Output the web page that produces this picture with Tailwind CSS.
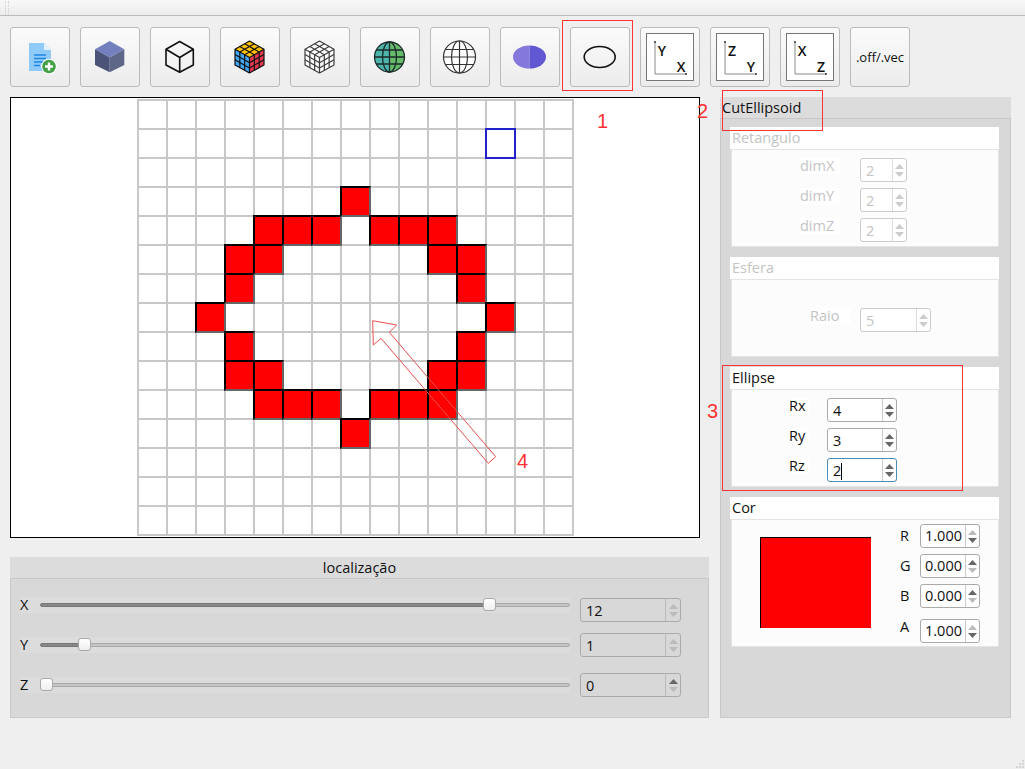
<!DOCTYPE html>
<html lang="en">
<head>
    <meta charset="UTF-8">
    <title>CutEllipsoid</title>
    <script src="https://cdn.jsdelivr.net/npm/@tailwindcss/browser@4"></script>
</head>
<body class="bg-[#efefef]">
<div class="relative w-[1025px] h-[769px] overflow-hidden bg-[#efefef] text-[14.5px] leading-4 text-[#111] font-['Open_Sans',sans-serif]">

    <!-- top strip -->
    <div class="h-4 border-b border-[#bdbdbd] bg-gradient-to-b from-[#f8f8f8] to-[#ececec] pl-[5px] pt-px">
        <div class="w-1 h-3.5 border-x border-dotted border-[#cfcfcf]"></div>
    </div>

    <!-- toolbar -->
    <div class="flex gap-2.5 pl-2.5 pt-[11px] pb-2.5">
        <button class="w-[60px] h-[60px] rounded-[3px] border border-[#bbb] bg-gradient-to-b from-[#fbfbfb] to-[#ececec]">
            <svg class="-m-px" width="60" height="60">
                <path d="M19 16H34L41 23V44H19z" fill="#90caf9"/>
                <path d="M34 16L41 23H34z" fill="#e3f2fd"/>
                <path d="M24 28H36M24 31.500H36M24 35H33M24 38.500H30" stroke="#1e88e5" stroke-width="1.300"/>
                <circle cx="39" cy="39.500" r="7.800" fill="#fff"/>
                <circle cx="39" cy="39.500" r="6.800" fill="#43a047"/>
                <path d="M39 35.500V43.500M35 39.500H43" stroke="#fff" stroke-width="2.400"/>
            </svg>
        </button>
        <button class="w-[60px] h-[60px] rounded-[3px] border border-[#bbb] bg-gradient-to-b from-[#fbfbfb] to-[#ececec]">
            <svg class="-m-px" width="60" height="60">
                <path d="M29.700 14L44.300 22.300L29.700 30.500L15 22.300z" fill="#7280bd"/>
                <path d="M15 22.300L29.700 30.500V45.300L15 38z" fill="#4b5478"/>
                <path d="M44.300 22.300L29.700 30.500V45.300L44.300 38z" fill="#5f6789"/>
            </svg>
        </button>
        <button class="w-[60px] h-[60px] rounded-[3px] border border-[#bbb] bg-gradient-to-b from-[#fbfbfb] to-[#ececec]">
            <svg class="-m-px" width="60" height="60" fill="none" stroke="#111" stroke-width="1.600" stroke-linejoin="round">
                <path d="M29.700 14.500L43.300 22.300V38L29.700 45.300L16 38V22.300zM16 22.300L29.700 30.500L43.300 22.300M29.700 30.500V45.300"/>
            </svg>
        </button>
        <button class="w-[60px] h-[60px] rounded-[3px] border border-[#bbb] bg-gradient-to-b from-[#fbfbfb] to-[#ececec]">
            <svg class="-m-px" width="60" height="60">
                <path d="M29.500 14L44 22.300L29.500 30.500L15 22.300z" fill="#ffc107"/>
                <path d="M15 22.300L29.500 30.500V46L15 38z" fill="#42a5f5"/>
                <path d="M44 22.300L29.500 30.500V46L44 38z" fill="#e53950"/>
                <g id="isoLines" fill="none" stroke="#111" stroke-width="1.200" stroke-linejoin="round">
                    <path d="M29.500 14L44 22.300V38L29.500 46L15 38V22.300zM15 22.300L29.500 30.500L44 22.300M29.500 30.500V46"/>
                    <path d="M24.670 16.770L39.170 25.070M19.830 19.530L34.330 27.830M34.330 16.770L19.830 25.070M39.170 19.530L24.670 27.830"/>
                    <path d="M15 27.500L29.500 35.700L44 27.500M15 32.700L29.500 40.900L44 32.700"/>
                    <path d="M19.830 25.070V40.700M24.670 27.830V43.400M34.330 27.830V43.400M39.170 25.070V40.700"/>
                </g>
            </svg>
        </button>
        <button class="w-[60px] h-[60px] rounded-[3px] border border-[#bbb] bg-gradient-to-b from-[#fbfbfb] to-[#ececec]">
            <svg class="-m-px opacity-80" width="60" height="60">
                <path d="M29.500 14L44 22.300V38L29.500 46L15 38V22.300z" fill="#fff"/>
                <use href="#isoLines"/>
            </svg>
        </button>
        <button class="w-[60px] h-[60px] rounded-[3px] border border-[#bbb] bg-gradient-to-b from-[#fbfbfb] to-[#ececec]">
            <svg class="-m-px" width="60" height="60">
                <path d="M29.500 15A15 15 0 0 0 29.500 45z" fill="#4db6ac"/>
                <path d="M29.500 15A15 15 0 0 1 29.500 45z" fill="#66bb6a"/>
                <g fill="none" stroke="#1b2a2a" stroke-width="1.300">
                    <circle cx="29.500" cy="30" r="15"/>
                    <ellipse cx="29.500" cy="30" rx="7" ry="15"/>
                    <path d="M29.500 15V45M16 23H43M14.500 30H44.500M16 37H43"/>
                </g>
            </svg>
        </button>
        <button class="w-[60px] h-[60px] rounded-[3px] border border-[#bbb] bg-gradient-to-b from-[#fbfbfb] to-[#ececec]">
            <svg class="-m-px" width="60" height="60" fill="#fff" stroke="#333" stroke-width="1.200">
                <circle cx="29.500" cy="30" r="16"/>
                <ellipse cx="29.500" cy="30" rx="8" ry="16"/>
                <path d="M29.500 14V46M16 22.500H43M13.500 30H45.500M16 37.500H43"/>
            </svg>
        </button>
        <button class="w-[60px] h-[60px] rounded-[3px] border border-[#bbb] bg-gradient-to-b from-[#fbfbfb] to-[#ececec]">
            <svg class="-m-px" width="60" height="60">
                <path d="M29.500 18.500A16.500 11.500 0 0 0 29.500 41.500z" fill="#8478dc"/>
                <path d="M29.500 18.500A16.500 11.500 0 0 1 29.500 41.500z" fill="#6257d2"/>
            </svg>
        </button>
        <button class="w-[60px] h-[60px] rounded-[3px] border border-[#bbb] bg-gradient-to-b from-[#fbfbfb] to-[#ececec]">
            <svg class="-m-px" width="60" height="60">
                <ellipse cx="29.700" cy="30" rx="15.500" ry="10.500" fill="none" stroke="#111" stroke-width="1.600"/>
            </svg>
        </button>
        <button class="w-[60px] h-[60px] rounded-[3px] border border-[#bbb] bg-gradient-to-b from-[#fbfbfb] to-[#ececec]">
            <svg class="-m-px" width="60" height="60" font-family="Open Sans, sans-serif" font-size="14" font-weight="600" text-anchor="middle" fill="#111">
                <rect x="6.500" y="6.500" width="47" height="47" fill="#fff" stroke="#777"/>
                <path d="M15 15V47H46" fill="none" stroke="#888"/>
                <circle cx="15" cy="15" r="1" fill="#333"/><circle cx="46" cy="47" r="1" fill="#333"/>
                <text x="22" y="29">Y</text><text x="41" y="45">X</text>
            </svg>
        </button>
        <button class="w-[60px] h-[60px] rounded-[3px] border border-[#bbb] bg-gradient-to-b from-[#fbfbfb] to-[#ececec]">
            <svg class="-m-px" width="60" height="60" font-family="Open Sans, sans-serif" font-size="14" font-weight="600" text-anchor="middle" fill="#111">
                <rect x="6.500" y="6.500" width="47" height="47" fill="#fff" stroke="#777"/>
                <path d="M15 15V47H46" fill="none" stroke="#888"/>
                <circle cx="15" cy="15" r="1" fill="#333"/><circle cx="46" cy="47" r="1" fill="#333"/>
                <text x="22" y="29">Z</text><text x="41" y="45">Y</text>
            </svg>
        </button>
        <button class="w-[60px] h-[60px] rounded-[3px] border border-[#bbb] bg-gradient-to-b from-[#fbfbfb] to-[#ececec]">
            <svg class="-m-px" width="60" height="60" font-family="Open Sans, sans-serif" font-size="14" font-weight="600" text-anchor="middle" fill="#111">
                <rect x="6.500" y="6.500" width="47" height="47" fill="#fff" stroke="#777"/>
                <path d="M15 15V47H46" fill="none" stroke="#888"/>
                <circle cx="15" cy="15" r="1" fill="#333"/><circle cx="46" cy="47" r="1" fill="#333"/>
                <text x="22" y="29">X</text><text x="41" y="45">Z</text>
            </svg>
        </button>
        <button class="w-[60px] h-[60px] rounded-[3px] border border-[#bbb] bg-gradient-to-b from-[#fbfbfb] to-[#ececec] text-[13px]">.off/.vec</button>
    </div>

    <div class="flex pl-2.5">
        <!-- left column -->
        <div class="w-[699px] mr-[11px]">
            <div class="w-[690px] h-[441px] border border-black bg-white pl-[126px] pt-px">
                <div id="grid" class="grid grid-cols-[repeat(15,29px)] grid-rows-[repeat(15,29px)] w-[437px] h-[437px] border-r-2 border-b-2 border-[#c8c8c8]"></div>
            </div>

            <div class="mt-[19px] h-[161px] flex flex-col bg-[#d8d8d8]">
                <div class="h-[21px] bg-[#dcdcdc] text-center leading-[21px]">localização</div>
                <div class="flex-1 border border-[#c8c8c8] pl-[9px] pt-[18px]">
                    <!-- X -->
                    <div class="flex items-start h-[25px]">
                        <div class="w-5 h-4 bg-[#dcdcdc]">X</div>
                        <div class="relative w-[530px] h-4 flex items-center bg-[#dcdcdc]">
                            <div class="w-[450px] h-1 rounded-l-sm border border-[#777] bg-[#888]"></div>
                            <div class="flex-1 h-1 rounded-r-sm border border-[#aaa] bg-[#c4c4c4]"></div>
                            <div class="absolute left-[443px] top-px w-[13px] h-[13px] rounded-[3px] border border-[#aaa] bg-gradient-to-b from-white to-[#eee]"></div>
                        </div>
                        <div class="ml-2.5 mt-px flex w-[101px] h-6 rounded-[3px] border border-[#aaa] overflow-hidden">
                            <span class="flex-1 flex items-center pl-[5px] pt-[2px]">12</span>
                            <span class="w-[15px] border-l border-[#bbb] flex flex-col items-center justify-center gap-[3px]">
                                <svg width="9" height="5"><path d="M4.500 0L9 5H0z" fill="#bbb"/></svg>
                                <svg width="9" height="5"><path d="M0 0H9L4.500 5z" fill="#bbb"/></svg>
                            </span>
                        </div>
                    </div>
                    <!-- Y -->
                    <div class="flex items-start h-6 mt-[11px]">
                        <div class="w-5 h-4 mt-1 bg-[#dcdcdc]">Y</div>
                        <div class="relative w-[530px] h-4 mt-1 flex items-center bg-[#dcdcdc]">
                            <div class="w-[44px] h-1 rounded-l-sm border border-[#777] bg-[#888]"></div>
                            <div class="flex-1 h-1 rounded-r-sm border border-[#aaa] bg-[#c4c4c4]"></div>
                            <div class="absolute left-[38px] top-px w-[13px] h-[13px] rounded-[3px] border border-[#aaa] bg-gradient-to-b from-white to-[#eee]"></div>
                        </div>
                        <div class="ml-2.5 flex w-[101px] h-6 rounded-[3px] border border-[#aaa] overflow-hidden">
                            <span class="flex-1 flex items-center pl-[5px] pt-[2px]">1</span>
                            <span class="w-[15px] border-l border-[#bbb] flex flex-col items-center justify-center gap-[3px]">
                                <svg width="9" height="5"><path d="M4.500 0L9 5H0z" fill="#bbb"/></svg>
                                <svg width="9" height="5"><path d="M0 0H9L4.500 5z" fill="#bbb"/></svg>
                            </span>
                        </div>
                    </div>
                    <!-- Z -->
                    <div class="flex items-start h-6 mt-4">
                        <div class="w-5 h-4 mt-1 bg-[#dcdcdc]">Z</div>
                        <div class="relative w-[530px] h-4 mt-1 flex items-center bg-[#dcdcdc]">
                            <div class="flex-1 h-1 rounded-sm border border-[#aaa] bg-[#c4c4c4]"></div>
                            <div class="absolute left-0 top-px w-[13px] h-[13px] rounded-[3px] border border-[#aaa] bg-gradient-to-b from-white to-[#eee]"></div>
                        </div>
                        <div class="ml-2.5 flex w-[101px] h-6 rounded-[3px] border border-[#aaa] overflow-hidden">
                            <span class="flex-1 flex items-center pl-[5px] pt-[2px]">0</span>
                            <span class="w-[15px] border-l border-[#bbb] flex flex-col items-center justify-center gap-[3px]">
                                <svg width="9" height="5"><path d="M4.500 0L9 5H0z" fill="#666"/></svg>
                                <svg width="9" height="5"><path d="M0 0H9L4.500 5z" fill="#bbb"/></svg>
                            </span>
                        </div>
                    </div>
                </div>
            </div>
        </div>

        <!-- right panel -->
        <div class="w-[291px] h-[621px] flex flex-col bg-[#d8d8d8]">
            <div class="h-[21px] bg-[#dcdcdc] pl-0.5 leading-[21px]">CutEllipsoid</div>
            <div class="flex-1 flex flex-col gap-2.5 border border-[#c8c8c8] pl-[9px] pr-[11px] pt-2">
                <!-- Retangulo -->
                <div class="text-[#c4c4c4]">
                    <div class="h-[22px] bg-white pl-0.5 leading-[22px]">Retangulo</div>
                    <div class="h-[98px] ml-px border border-[#e4e4e4] bg-[#fcfcfc] pl-[68px] pt-2 flex flex-col gap-1.5">
                        <div class="flex items-start h-6">
                            <span class="w-[60px]"><span class="inline-block w-10 bg-white">dimX</span></span>
                            <div class="flex w-[47px] h-6 rounded-[3px] border border-[#ccc] bg-white overflow-hidden">
                                <span class="flex-1 flex items-center pl-[5px] pt-[2px]">2</span>
                                <span class="w-[14px] border-l border-[#ddd] flex flex-col items-center justify-center gap-[3px]">
                                    <svg width="9" height="5"><path d="M4.500 0L9 5H0z" fill="#ccc"/></svg>
                                    <svg width="9" height="5"><path d="M0 0H9L4.500 5z" fill="#ccc"/></svg>
                                </span>
                            </div>
                        </div>
                        <div class="flex items-start h-6">
                            <span class="w-[60px]"><span class="inline-block w-10 bg-white">dimY</span></span>
                            <div class="flex w-[47px] h-6 rounded-[3px] border border-[#ccc] bg-white overflow-hidden">
                                <span class="flex-1 flex items-center pl-[5px] pt-[2px]">2</span>
                                <span class="w-[14px] border-l border-[#ddd] flex flex-col items-center justify-center gap-[3px]">
                                    <svg width="9" height="5"><path d="M4.500 0L9 5H0z" fill="#ccc"/></svg>
                                    <svg width="9" height="5"><path d="M0 0H9L4.500 5z" fill="#ccc"/></svg>
                                </span>
                            </div>
                        </div>
                        <div class="flex items-start h-6">
                            <span class="w-[60px]"><span class="inline-block w-10 bg-white">dimZ</span></span>
                            <div class="flex w-[47px] h-6 rounded-[3px] border border-[#ccc] bg-white overflow-hidden">
                                <span class="flex-1 flex items-center pl-[5px] pt-[2px]">2</span>
                                <span class="w-[14px] border-l border-[#ddd] flex flex-col items-center justify-center gap-[3px]">
                                    <svg width="9" height="5"><path d="M4.500 0L9 5H0z" fill="#ccc"/></svg>
                                    <svg width="9" height="5"><path d="M0 0H9L4.500 5z" fill="#ccc"/></svg>
                                </span>
                            </div>
                        </div>
                    </div>
                </div>
                <!-- Esfera -->
                <div class="text-[#c4c4c4]">
                    <div class="h-[22px] bg-white pl-0.5 leading-[22px]">Esfera</div>
                    <div class="h-[78px] ml-px border border-[#e4e4e4] bg-[#fcfcfc] pl-[78px] pt-7">
                        <div class="flex items-start h-6">
                            <span class="w-[50px]"><span class="inline-block w-10 bg-white">Raio</span></span>
                            <div class="flex w-[71px] h-6 rounded-[3px] border border-[#ccc] bg-white overflow-hidden">
                                <span class="flex-1 flex items-center pl-[5px] pt-[2px]">5</span>
                                <span class="w-[14px] border-l border-[#ddd] flex flex-col items-center justify-center gap-[3px]">
                                    <svg width="9" height="5"><path d="M4.500 0L9 5H0z" fill="#ccc"/></svg>
                                    <svg width="9" height="5"><path d="M0 0H9L4.500 5z" fill="#ccc"/></svg>
                                </span>
                            </div>
                        </div>
                    </div>
                </div>
                <!-- Ellipse -->
                <div>
                    <div class="h-[22px] bg-white pl-0.5 leading-[22px]">Ellipse</div>
                    <div class="h-[98px] ml-px border border-[#e4e4e4] bg-[#fcfcfc] pl-[57px] pt-2 flex flex-col gap-1.5">
                        <div class="flex items-start h-6">
                            <span class="w-[38px]"><span class="inline-block w-5 bg-white">Rx</span></span>
                            <div class="flex w-[70px] h-6 rounded-[3px] border border-[#aaa] bg-white overflow-hidden">
                                <span class="flex-1 flex items-center pl-[5px] pt-[2px]">4</span>
                                <span class="w-[14px] border-l border-[#ccc] flex flex-col items-center justify-center gap-[3px]">
                                    <svg width="9" height="5"><path d="M4.500 0L9 5H0z" fill="#666"/></svg>
                                    <svg width="9" height="5"><path d="M0 0H9L4.500 5z" fill="#666"/></svg>
                                </span>
                            </div>
                        </div>
                        <div class="flex items-start h-6">
                            <span class="w-[38px]"><span class="inline-block w-5 bg-white">Ry</span></span>
                            <div class="flex w-[70px] h-6 rounded-[3px] border border-[#aaa] bg-white overflow-hidden">
                                <span class="flex-1 flex items-center pl-[5px] pt-[2px]">3</span>
                                <span class="w-[14px] border-l border-[#ccc] flex flex-col items-center justify-center gap-[3px]">
                                    <svg width="9" height="5"><path d="M4.500 0L9 5H0z" fill="#666"/></svg>
                                    <svg width="9" height="5"><path d="M0 0H9L4.500 5z" fill="#666"/></svg>
                                </span>
                            </div>
                        </div>
                        <div class="flex items-start h-6">
                            <span class="w-[38px]"><span class="inline-block w-5 bg-white">Rz</span></span>
                            <div class="flex w-[70px] h-6 rounded-[3px] border border-[#4a8db5] bg-white overflow-hidden">
                                <span class="flex-1 flex items-center pl-[5px] pt-[2px]">2<span class="w-px h-[17px] bg-black"></span></span>
                                <span class="w-[14px] border-l border-[#ccc] flex flex-col items-center justify-center gap-[3px]">
                                    <svg width="9" height="5"><path d="M4.500 0L9 5H0z" fill="#666"/></svg>
                                    <svg width="9" height="5"><path d="M0 0H9L4.500 5z" fill="#666"/></svg>
                                </span>
                            </div>
                        </div>
                    </div>
                </div>
                <!-- Cor -->
                <div>
                    <div class="h-[22px] bg-white pl-0.5 leading-[22px]">Cor</div>
                    <div class="h-[128px] ml-px border border-[#e4e4e4] bg-[#fcfcfc] flex">
                        <div class="w-[111px] h-[91px] ml-7 mt-[17px] bg-[#ff0000] border-l border-t border-black"></div>
                        <div class="ml-[29px] pt-1 flex flex-col gap-1.5">
                            <div class="flex items-center h-6">
                                <span class="w-5">R</span>
                                <div class="flex w-[60px] h-6 rounded-[3px] border border-[#aaa] bg-white overflow-hidden">
                                    <span class="flex-1 flex items-center pl-1">1.000</span>
                                    <span class="w-[14px] border-l border-[#ccc] flex flex-col items-center justify-center gap-[3px]">
                                        <svg width="9" height="5"><path d="M4.500 0L9 5H0z" fill="#bbb"/></svg>
                                        <svg width="9" height="5"><path d="M0 0H9L4.500 5z" fill="#666"/></svg>
                                    </span>
                                </div>
                            </div>
                            <div class="flex items-center h-6">
                                <span class="w-5">G</span>
                                <div class="flex w-[60px] h-6 rounded-[3px] border border-[#aaa] bg-white overflow-hidden">
                                    <span class="flex-1 flex items-center pl-1">0.000</span>
                                    <span class="w-[14px] border-l border-[#ccc] flex flex-col items-center justify-center gap-[3px]">
                                        <svg width="9" height="5"><path d="M4.500 0L9 5H0z" fill="#666"/></svg>
                                        <svg width="9" height="5"><path d="M0 0H9L4.500 5z" fill="#bbb"/></svg>
                                    </span>
                                </div>
                            </div>
                            <div class="flex items-center h-6">
                                <span class="w-5">B</span>
                                <div class="flex w-[60px] h-6 rounded-[3px] border border-[#aaa] bg-white overflow-hidden">
                                    <span class="flex-1 flex items-center pl-1">0.000</span>
                                    <span class="w-[14px] border-l border-[#ccc] flex flex-col items-center justify-center gap-[3px]">
                                        <svg width="9" height="5"><path d="M4.500 0L9 5H0z" fill="#666"/></svg>
                                        <svg width="9" height="5"><path d="M0 0H9L4.500 5z" fill="#bbb"/></svg>
                                    </span>
                                </div>
                            </div>
                            <div class="flex items-start h-6 mt-[5px]">
                                <span class="w-5">A</span>
                                <div class="flex w-[60px] h-6 rounded-[3px] border border-[#aaa] bg-white overflow-hidden">
                                    <span class="flex-1 flex items-center pl-1">1.000</span>
                                    <span class="w-[14px] border-l border-[#ccc] flex flex-col items-center justify-center gap-[3px]">
                                        <svg width="9" height="5"><path d="M4.500 0L9 5H0z" fill="#bbb"/></svg>
                                        <svg width="9" height="5"><path d="M0 0H9L4.500 5z" fill="#666"/></svg>
                                    </span>
                                </div>
                            </div>
                        </div>
                    </div>
                </div>
            </div>
        </div>
    </div>

    <!-- resize grip -->
    <svg class="absolute right-0 bottom-0" width="10" height="10" fill="#d4d4d4">
        <rect x="7" y="1" width="2" height="2"/><rect x="4" y="4" width="2" height="2"/><rect x="7" y="4" width="2" height="2"/>
        <rect x="1" y="7" width="2" height="2"/><rect x="4" y="7" width="2" height="2"/><rect x="7" y="7" width="2" height="2"/>
    </svg>

    <!-- annotations drawn over the window -->
    <div class="absolute left-[562px] top-5 w-[71px] h-[71px] border border-[#f33]"></div>
    <div class="absolute left-[722px] top-[90px] w-[101px] h-[41px] border border-[#f33]"></div>
    <div class="absolute left-[722px] top-[365px] w-[241px] h-[126px] border border-[#f33]"></div>
    <span class="absolute left-[597px] top-[109px] text-[20px] leading-6 text-[#f33] font-['Liberation_Sans',sans-serif]">1</span>
    <span class="absolute left-[697px] top-[99px] text-[20px] leading-6 text-[#f33] font-['Liberation_Sans',sans-serif]">2</span>
    <span class="absolute left-[707px] top-[399px] text-[20px] leading-6 text-[#f33] font-['Liberation_Sans',sans-serif]">3</span>
    <span class="absolute left-[517px] top-[449px] text-[20px] leading-6 text-[#f33] font-['Liberation_Sans',sans-serif]">4</span>
    <svg class="absolute left-0 top-0 z-20 pointer-events-none" width="1025" height="769">
        <path d="M372.700 320.700L396.700 325L389.300 332.300L495.700 456.700L488.300 463.300L381 338.300L373.300 345z" fill="none" stroke="#e85050" stroke-width="1"/>
    </svg>
</div>

<script>
    // cells of the slice, as "row,col"
    const filled = ['3,7',
        '4,4','4,5','4,6','4,8','4,9','4,10',
        '5,3','5,4','5,10','5,11',
        '6,3','6,11',
        '7,2','7,12',
        '8,3','8,11',
        '9,3','9,4','9,10','9,11',
        '10,4','10,5','10,6','10,8','10,9','10,10',
        '11,7'];
    const grid = document.getElementById('grid');
    for (let r = 0; r < 15; r++) {
        for (let c = 0; c < 15; c++) {
            const cell = document.createElement('div');
            if (filled.includes(r + ',' + c)) {
                cell.className = 'relative z-10 w-[31px] h-[31px] bg-[#ff0000] border-2 border-t-black border-l-black border-r-[#666] border-b-[#666]';
            } else if (r === 1 && c === 12) {
                cell.className = 'relative z-10 w-[31px] h-[31px] border-2 border-[#2222cc]';
            } else {
                cell.className = 'h-[29px] border-t-2 border-l-2 border-[#c8c8c8]';
            }
            grid.appendChild(cell);
        }
    }
</script>
</body>
</html>
